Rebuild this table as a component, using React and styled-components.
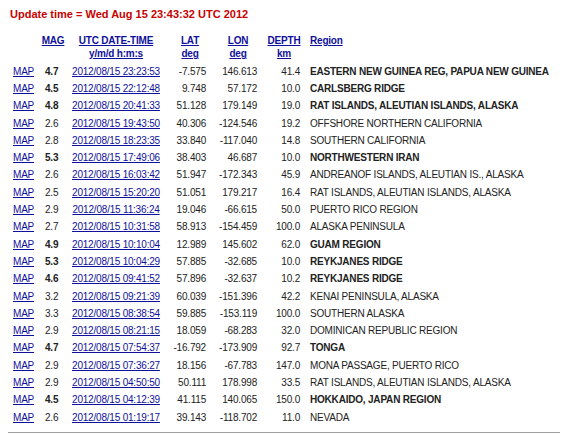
import styled, { createGlobalStyle } from "styled-components";

const GlobalStyle = createGlobalStyle`
  body {
    margin: 8px;
    background: #fff;
    font-family: "Liberation Sans", Arial, sans-serif;
    color: #222;
  }
`;

const rows = [
  ["4.7", "2012/08/15 23:23:53", "-7.575", "146.613", "41.4", "EASTERN NEW GUINEA REG, PAPUA NEW GUINEA"],
  ["4.5", "2012/08/15 22:12:48", "9.748", "57.172", "10.0", "CARLSBERG RIDGE"],
  ["4.8", "2012/08/15 20:41:33", "51.128", "179.149", "19.0", "RAT ISLANDS, ALEUTIAN ISLANDS, ALASKA"],
  ["2.6", "2012/08/15 19:43:50", "40.306", "-124.546", "19.2", "OFFSHORE NORTHERN CALIFORNIA"],
  ["2.8", "2012/08/15 18:23:35", "33.840", "-117.040", "14.8", "SOUTHERN CALIFORNIA"],
  ["5.3", "2012/08/15 17:49:06", "38.403", "46.687", "10.0", "NORTHWESTERN IRAN"],
  ["2.6", "2012/08/15 16:03:42", "51.947", "-172.343", "45.9", "ANDREANOF ISLANDS, ALEUTIAN IS., ALASKA"],
  ["2.5", "2012/08/15 15:20:20", "51.051", "179.217", "16.4", "RAT ISLANDS, ALEUTIAN ISLANDS, ALASKA"],
  ["2.9", "2012/08/15 11:36:24", "19.046", "-66.615", "50.0", "PUERTO RICO REGION"],
  ["2.7", "2012/08/15 10:31:58", "58.913", "-154.459", "100.0", "ALASKA PENINSULA"],
  ["4.9", "2012/08/15 10:10:04", "12.989", "145.602", "62.0", "GUAM REGION"],
  ["5.3", "2012/08/15 10:04:29", "57.885", "-32.685", "10.0", "REYKJANES RIDGE"],
  ["4.6", "2012/08/15 09:41:52", "57.896", "-32.637", "10.2", "REYKJANES RIDGE"],
  ["3.2", "2012/08/15 09:21:39", "60.039", "-151.396", "42.2", "KENAI PENINSULA, ALASKA"],
  ["3.3", "2012/08/15 08:38:54", "59.885", "-153.119", "100.0", "SOUTHERN ALASKA"],
  ["2.9", "2012/08/15 08:21:15", "18.059", "-68.283", "32.0", "DOMINICAN REPUBLIC REGION"],
  ["4.7", "2012/08/15 07:54:37", "-16.792", "-173.909", "92.7", "TONGA"],
  ["2.9", "2012/08/15 07:36:27", "18.156", "-67.783", "147.0", "MONA PASSAGE, PUERTO RICO"],
  ["2.9", "2012/08/15 04:50:50", "50.111", "178.998", "33.5", "RAT ISLANDS, ALEUTIAN ISLANDS, ALASKA"],
  ["4.5", "2012/08/15 04:12:39", "41.115", "140.065", "150.0", "HOKKAIDO, JAPAN REGION"],
  ["2.6", "2012/08/15 01:19:17", "39.143", "-118.702", "11.0", "NEVADA"],
];

const UpdateTitle = styled.div`
  color: #c80000;
  font-weight: bold;
  font-size: 11px;
  line-height: 12px;
  padding-left: 2px;
`;

const Table = styled.div`
  margin-top: 14px;
  padding-left: 5px;
  font-size: 10px;
  letter-spacing: -0.2px;
`;

const Grid = styled.div`
  display: grid;
  grid-template-columns: 27px 26px 100px 48px 48px 44px 1fr;
  align-items: center;
  height: ${(p) => p.$h};
  margin-bottom: ${(p) => p.$mb || 0};
`;

const Link = styled.a`
  color: #10109c;
  text-decoration: underline;
  cursor: pointer;
  font-weight: ${(p) => (p.$bold ? "bold" : "normal")};
`;

const HeadCell = styled.div`
  text-align: ${(p) => p.$align || "center"};
  padding-left: ${(p) => p.$pl || 0};
  line-height: 13px;
  font-weight: bold;
`;

const Cell = styled.div`
  text-align: ${(p) => p.$align || "left"};
  padding-left: ${(p) => p.$pl || 0};
  padding-right: ${(p) => p.$pr || 0};
  font-weight: ${(p) => (p.$bold ? "bold" : "normal")};
  white-space: nowrap;
  line-height: 12px;
`;

const Rule = styled.hr`
  border: none;
  border-top: 1px solid #a0a0a0;
  margin: 6px -8px 0 0;
  height: 0;
`;

export default function App() {
  return (
    <>
      <GlobalStyle />
      <UpdateTitle>Update time = Wed Aug 15 23:43:32 UTC 2012</UpdateTitle>
      <Table>
        <Grid $h="26px" $mb="3px">
          <HeadCell />
          <HeadCell><Link $bold>MAG</Link><br />&nbsp;</HeadCell>
          <HeadCell><Link $bold>UTC DATE-TIME</Link><br /><Link $bold>y/m/d h:m:s</Link></HeadCell>
          <HeadCell><Link $bold>LAT</Link><br /><Link $bold>deg</Link></HeadCell>
          <HeadCell><Link $bold>LON</Link><br /><Link $bold>deg</Link></HeadCell>
          <HeadCell><Link $bold>DEPTH</Link><br /><Link $bold>km</Link></HeadCell>
          <HeadCell $align="left" $pl="4px"><Link $bold>Region</Link><br />&nbsp;</HeadCell>
        </Grid>
        {rows.map((r, i) => {
          const big = parseFloat(r[0]) >= 4.5;
          return (
            <Grid key={i} $h="17.3px">
              <Cell><Link>MAP</Link></Cell>
              <Cell $pl="5px" $bold={big}>{r[0]}</Cell>
              <Cell $align="center"><Link>{r[1]}</Link></Cell>
              <Cell $align="right" $pr="8px">{r[2]}</Cell>
              <Cell $align="right" $pr="5px">{r[3]}</Cell>
              <Cell $align="right" $pr="6px">{r[4]}</Cell>
              <Cell $pl="4px" $bold={big}>{r[5]}</Cell>
            </Grid>
          );
        })}
      </Table>
      <Rule />
    </>
  );
}
